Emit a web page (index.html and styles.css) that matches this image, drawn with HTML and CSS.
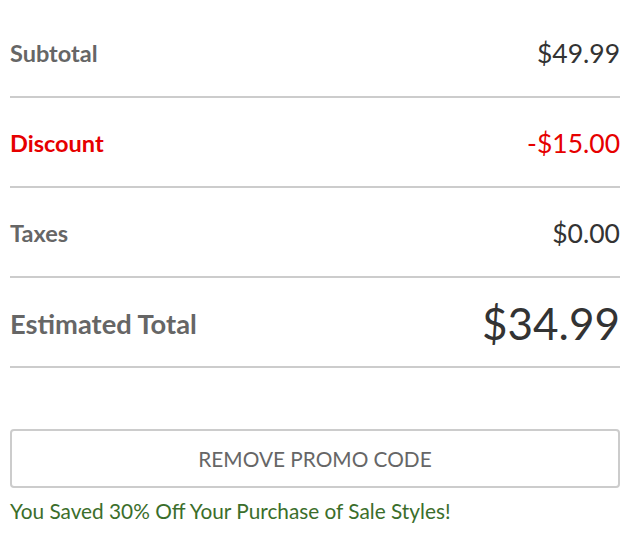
FILE: index.html
```html
<!DOCTYPE html>
<html>
<head>
<meta charset="utf-8">
<link rel="stylesheet" href="styles.css">
</head>
<body>
<div class="summary">
  <div class="row">
    <span class="label">Subtotal</span>
    <span class="value">$49.99</span>
  </div>
  <div class="row discount">
    <span class="label">Discount</span>
    <span class="value">-$15.00</span>
  </div>
  <div class="row">
    <span class="label">Taxes</span>
    <span class="value">$0.00</span>
  </div>
  <div class="row total">
    <span class="label">Estimated Total</span>
    <span class="value">$34.99</span>
  </div>
  <button class="promo-btn">REMOVE PROMO CODE</button>
  <p class="saved">You Saved 30% Off Your Purchase of Sale Styles!</p>
</div>
</body>
</html>
```
FILE: styles.css
```css
html, body {
  margin: 0;
  padding: 0;
  background: #fff;
}
body {
  font-family: Lato, "Liberation Sans", sans-serif;
}
.summary {
  width: 610px;
  margin-left: 10px;
  padding-top: 8px;
}
.row {
  display: flex;
  justify-content: space-between;
  align-items: center;
  height: 88px;
  border-bottom: 2px solid #cccccc;
}
.label {
  font-size: 23.5px;
  font-weight: 700;
  color: #666666;
  padding-top: 2px;
}
.value {
  font-size: 26.5px;
  color: #333333;
  padding-top: 2px;
}
.discount .label,
.discount .value {
  color: #e60000;
}
.total .label {
  font-size: 27.3px;
}
.total .value {
  font-size: 44px;
}
.promo-btn {
  display: block;
  width: 610px;
  height: 59px;
  margin-top: 61px;
  border: 2px solid #cccccc;
  border-radius: 4px;
  background: #fff;
  font-family: Lato, "Liberation Sans", sans-serif;
  font-size: 20.8px;
  color: #666666;
  padding: 0;
}
.saved {
  margin: 10px 0 0;
  font-size: 20.8px;
  color: #3b6e2b;
}
```
